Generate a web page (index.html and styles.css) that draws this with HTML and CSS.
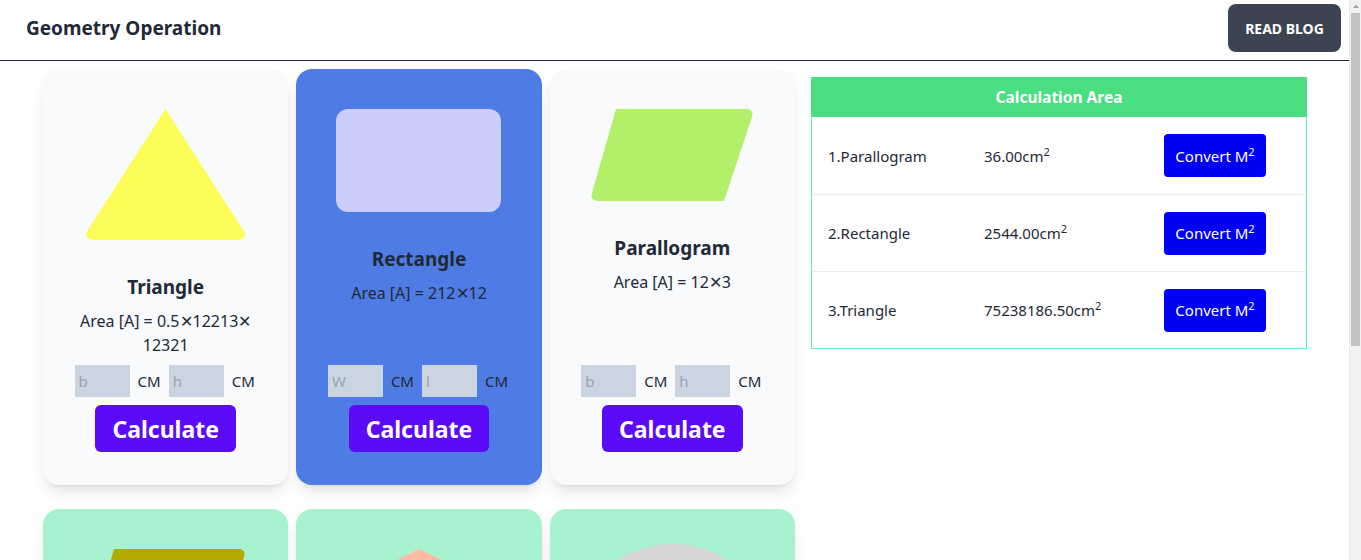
FILE: index.html
```html
<!DOCTYPE html>
<html lang="en">
<head>
<meta charset="utf-8">
<title>Geometry Operation</title>
<link rel="stylesheet" href="styles.css">
</head>
<body>
<header class="navbar">
  <a class="brand">Geometry Operation</a>
  <button class="blog-btn">READ BLOG</button>
</header>
<main class="main">
  <section class="cards">
    <div class="card card-light">
      <svg class="shape" width="159" height="131" viewBox="0 0 159 131"><path d="M79.5 0 L159 124 Q160 131 150 131 L9 131 Q-1 131 0 124 Z" fill="#fdfd5a"/></svg>
      <h2 class="card-title">Triangle</h2>
      <p class="area">Area [A] = 0.5✕12213✕ 12321</p>
      <div class="inputs">
        <input class="num" placeholder="b"><span class="unit">CM</span>
        <input class="num" placeholder="h"><span class="unit">CM</span>
      </div>
      <button class="calc">Calculate</button>
    </div>
    <div class="card card-blue">
      <div class="rect-shape"></div>
      <h2 class="card-title">Rectangle</h2>
      <p class="area">Area [A] = 212✕12</p>
      <div class="inputs">
        <input class="num" placeholder="W"><span class="unit">CM</span>
        <input class="num" placeholder="l"><span class="unit">CM</span>
      </div>
      <button class="calc">Calculate</button>
    </div>
    <div class="card card-light">
      <svg class="shape" width="163" height="92" viewBox="0 0 163 92"><path d="M25 0 L156 0 Q163 1 161 8 L133 92 L6 92 Q-1 91 1 84 Z" fill="#b3f06a"/></svg>
      <h2 class="card-title">Parallogram</h2>
      <p class="area">Area [A] = 12✕3</p>
      <div class="inputs">
        <input class="num" placeholder="b"><span class="unit">CM</span>
        <input class="num" placeholder="h"><span class="unit">CM</span>
      </div>
      <button class="calc">Calculate</button>
    </div>
    <div class="card card-mint">
      <svg class="shape" width="160" height="100" viewBox="0 0 160 100"><path d="M28 0 L154 0 Q160 1 158 8 L136 100 L0 100 Z" fill="#b5a905"/></svg>
      <h2 class="card-title">Trapezium</h2>
      <p class="area">Area [A] = 0.5✕(a+b)✕h</p>
      <div class="inputs">
        <input class="num" placeholder="a"><span class="unit">CM</span>
        <input class="num" placeholder="h"><span class="unit">CM</span>
      </div>
      <button class="calc">Calculate</button>
    </div>
    <div class="card card-mint">
      <svg class="shape" width="200" height="130" viewBox="0 0 200 130"><path d="M100 0 L200 49 L160 130 L40 130 L0 49 Z" fill="#fdbba3"/></svg>
      <h2 class="card-title">Pentagon</h2>
      <p class="area">Area [A] = 0.5✕p✕b</p>
      <div class="inputs">
        <input class="num" placeholder="p"><span class="unit">CM</span>
        <input class="num" placeholder="b"><span class="unit">CM</span>
      </div>
      <button class="calc">Calculate</button>
    </div>
    <div class="card card-mint">
      <div class="circle-shape"></div>
      <h2 class="card-title">Circle</h2>
      <p class="area">Area [A] = π✕r²</p>
      <div class="inputs">
        <input class="num" placeholder="r"><span class="unit">CM</span>
      </div>
      <button class="calc">Calculate</button>
    </div>
  </section>
  <section class="results">
    <div class="results-head">Calculation Area</div>
    <div class="result-row">
      <span>1.Parallogram</span>
      <span>36.00cm<sup>2</sup></span>
      <span><button class="convert">Convert M<sup>2</sup></button></span>
    </div>
    <div class="result-row">
      <span>2.Rectangle</span>
      <span>2544.00cm<sup>2</sup></span>
      <span><button class="convert">Convert M<sup>2</sup></button></span>
    </div>
    <div class="result-row">
      <span>3.Triangle</span>
      <span>75238186.50cm<sup>2</sup></span>
      <span><button class="convert">Convert M<sup>2</sup></button></span>
    </div>
  </section>
</main>
<div class="fake-scrollbar" aria-hidden="true">
  <svg class="sb-arrow" width="12" height="12" viewBox="0 0 12 12"><path d="M3 8 L6 4.5 L9 8 Z" fill="#a3a3a3"/></svg>
  <div class="sb-thumb"></div>
</div>
</body>
</html>
```
FILE: styles.css
```css
* { box-sizing: border-box; }
html, body { margin: 0; padding: 0; }
body {
  font-family: "Noto Sans", "Open Sans", sans-serif;
  color: #1f2937;
  background: #ffffff;
  padding-right: 12px;
}
.fake-scrollbar {
  position: fixed;
  top: 0;
  right: 0;
  width: 12px;
  height: 100vh;
  background: #f1f1f1;
  border-left: 1px solid #e8e8e8;
}
.sb-arrow { display: block; }
.sb-thumb {
  margin: 1px 1px 0 1px;
  height: 333px;
  background: #c1c1c1;
}
.navbar {
  display: flex;
  align-items: center;
  justify-content: space-between;
  padding: 4px 8px 8px 8px;
  border-bottom: 1px solid #1f2937;
}
.brand {
  padding: 0 16px 0 18px;
  font-size: 19px;
  font-weight: 700;
  color: #1f2937;
}
.blog-btn {
  height: 48px;
  width: 113px;
  border: none;
  border-radius: 8px;
  background: #3d4451;
  color: #ffffff;
  font-family: inherit;
  font-size: 14px;
  font-weight: 700;
}
.main {
  display: flex;
  align-items: flex-start;
  padding: 8px 0 0 43px;
  gap: 16px;
}
.cards {
  width: 752px;
  flex: none;
  display: grid;
  grid-template-columns: repeat(3, minmax(0, 1fr));
  column-gap: 8px;
  row-gap: 24px;
  padding-bottom: 8px;
}
.card {
  height: 416px;
  min-width: 0;
  border-radius: 16px;
  padding: 40px 20px 33px;
  display: flex;
  flex-direction: column;
  align-items: center;
  text-align: center;
  overflow: hidden;
  box-shadow: 0 10px 15px -3px rgba(0,0,0,0.1), 0 4px 6px -4px rgba(0,0,0,0.1);
}
.card-light { background: #f8fafc; }
.card-blue { background: #4f7be4; }
.card-mint { background: #a7f3d0; }
.shape { display: block; flex: none; }
.rect-shape {
  width: 165px;
  height: 103px;
  border-radius: 12px;
  background: #ccccfd;
  flex: none;
}
.circle-shape {
  width: 205px;
  height: 205px;
  margin-top: -5px;
  border-radius: 50%;
  background: #d6d6d6;
  flex: none;
}
.card-title {
  margin: 33px 0 0;
  font-size: 19px;
  line-height: 28px;
  font-weight: 700;
}
.area {
  margin: 8px 0 0;
  font-size: 16px;
  line-height: 24px;
}
.inputs {
  margin-top: auto;
  display: flex;
  align-items: center;
  justify-content: center;
}
.num {
  width: 55px;
  height: 32px;
  border: none;
  background: #cbd5e1;
  padding: 0 4px;
  font-family: inherit;
  font-size: 15px;
  color: #1f2937;
}
.num::placeholder { color: #9ca3af; }
.unit {
  font-size: 15px;
  margin: 0 8px;
}
.unit:last-child { margin-right: 2px; }
.calc {
  margin-top: 8px;
  height: 47px;
  padding: 0 17px;
  border: none;
  border-radius: 6px;
  background: #5b0bf7;
  color: #ffffff;
  font-family: inherit;
  font-size: 23px;
  font-weight: 700;
}
.results {
  width: 496px;
  flex: none;
  margin-top: 8px;
  border: 1px solid #5ee9d2;
  border-top: none;
}
.results-head {
  height: 40px;
  margin: 0 -1px;
  background: #4ade80;
  color: #ffffff;
  font-weight: 700;
  font-size: 15.5px;
  display: flex;
  align-items: center;
  justify-content: center;
}
.result-row {
  display: grid;
  grid-template-columns: 156px 180px 1fr;
  align-items: center;
  height: 77px;
  padding-left: 16px;
  font-size: 15px;
  border-top: 1px solid #eeeeee;
}
.results-head + .result-row { border-top: none; }
sup { font-size: 11px; line-height: 0; }
.convert {
  width: 102px;
  height: 43px;
  border: none;
  border-radius: 4px;
  background: #0000f5;
  color: #ffffff;
  font-family: inherit;
  font-size: 15px;
  padding: 0;
}
```
